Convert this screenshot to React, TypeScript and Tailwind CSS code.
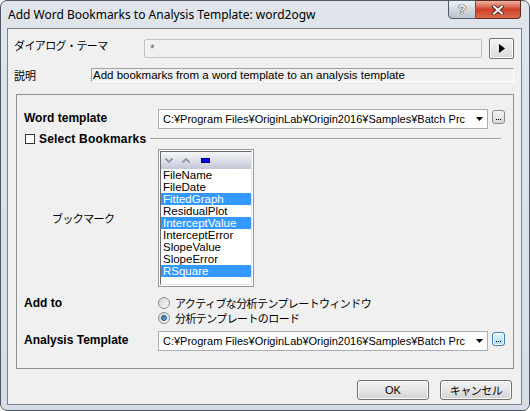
const latin = "font-['Liberation_Sans','Noto_Sans_CJK_JP',sans-serif]"
const jp = "font-['Noto_Sans_CJK_JP',sans-serif]"
const bold = "font-['Liberation_Sans',Arial,sans-serif] text-[12px] font-bold leading-[16px] text-black"

const path = 'C:¥Program Files¥OriginLab¥Origin2016¥Samples¥Batch Prc'

const bookmarks = [
  { name: 'FileName', on: false },
  { name: 'FileDate', on: false },
  { name: 'FittedGraph', on: true },
  { name: 'ResidualPlot', on: false },
  { name: 'InterceptValue', on: true },
  { name: 'InterceptError', on: false },
  { name: 'SlopeValue', on: false },
  { name: 'SlopeError', on: false },
  { name: 'RSquare', on: true },
]

function Combo({ value }: { value: string }) {
  return (
    <div className="flex h-[20px] w-[330px] items-center border border-[#abadb3] bg-white pl-[4px] pr-[4px]">
      <span className={`${latin} flex-1 overflow-hidden whitespace-nowrap text-[11px] leading-[18px] text-black`}>
        {value}
      </span>
      <svg width="7" height="4" viewBox="0 0 7 4" className="ml-[4px]">
        <path d="M0 0h7L3.5 4z" fill="#000" />
      </svg>
    </div>
  )
}

function Browse({ hot }: { hot?: boolean }) {
  return (
    <div
      className={
        hot
          ? 'flex h-[14px] w-[13px] items-end justify-center rounded-[3px] border border-[#3c7fb1] bg-gradient-to-b from-[#e8f6fd] to-[#a6d8f4] pb-[3px] shadow-[inset_0_0_0_1px_#ffffff]'
          : 'flex h-[14px] w-[13px] items-end justify-center rounded-[3px] border border-[#8a8a8a] bg-gradient-to-b from-[#f6f6f6] to-[#d6d6d6] pb-[3px]'
      }
    >
      <svg width="5" height="1" viewBox="0 0 5 1">
        <rect x="0" y="0" width="1" height="1" fill="#000" />
        <rect x="2" y="0" width="1" height="1" fill="#000" />
        <rect x="4" y="0" width="1" height="1" fill="#000" />
      </svg>
    </div>
  )
}

function Radio({ on }: { on?: boolean }) {
  return (
    <span className="flex h-[12px] w-[12px] items-center justify-center rounded-full border border-[#8e8f8f] bg-gradient-to-br from-[#d4d4d4] to-[#fbfbfb]">
      {on && <span className="h-[6px] w-[6px] rounded-full border border-[#1d4f86] bg-gradient-to-br from-[#2a65a3] to-[#7cc4f0]" />}
    </span>
  )
}

function WinButton({ children }: { children: React.ReactNode }) {
  return (
    <div className="flex h-[20px] w-[72px] items-center justify-center rounded-[3px] border border-[#707070] bg-gradient-to-b from-[#f2f2f2] via-[#e6e6e6] to-[#d2d2d2] shadow-[inset_0_0_0_1px_#fbfbfb]">
      {children}
    </div>
  )
}

export default function App() {
  return (
    <div className="h-[411px] w-[530px] bg-white">
      <div className="flex h-[411px] w-[530px] flex-col rounded-[7px] border border-[#4f5864] bg-gradient-to-b from-[#dfe5eb] to-[#d6dde5]">
        {/* title bar */}
        <div className="flex h-[27px] items-start">
          <div className="pl-[7px] pt-[6px] font-['Noto_Sans',sans-serif] text-[12px] leading-[16px] text-black">
            Add Word Bookmarks to Analysis Template: word2ogw
          </div>
          <div className="-mt-[1px] ml-auto mr-[8px] flex">
            <div className="flex h-[19px] w-[28px] items-center justify-center rounded-bl-[4px] border border-[#4f5b68] bg-gradient-to-b from-[#eef1f4] via-[#d3d9df] to-[#bcc4cd]">
              <span className="font-['Liberation_Sans',sans-serif] text-[13px] font-bold leading-none text-white [text-shadow:0_0_1px_#333,0_0_1px_#333,0_0_1px_#333]">
                ?
              </span>
            </div>
            <div className="flex h-[19px] w-[45px] items-center justify-center rounded-br-[4px] border border-l-0 border-[#5a2b22] bg-gradient-to-b from-[#eeb2a2] via-[#cc3f26] to-[#dc6a4c]">
              <svg width="12" height="10" viewBox="0 0 12 10">
                <path d="M2 1.5L10 8.5M10 1.5L2 8.5" stroke="#3a1a14" strokeWidth="3.6" strokeLinecap="square" />
                <path d="M2 1.5L10 8.5M10 1.5L2 8.5" stroke="#ffffff" strokeWidth="2" strokeLinecap="square" />
              </svg>
            </div>
          </div>
        </div>

        {/* client area */}
        <div className="ml-[6px] mr-[7px] flex h-[377px] flex-col border border-[#7a838d] bg-[#f0f0f0]">
          {/* dialog theme */}
          <div className="mt-[9px] flex items-start">
            <div className={`${jp} w-[136px] pl-[6px] text-[11px] leading-[14px] tracking-[-0.6px] text-black`}>
              ダイアログ・テーマ
            </div>
            <div className="mt-[1px] flex h-[19px] w-[338px] items-center rounded-[2px] border border-[#c2c2c2] bg-[#f0f0f0] pl-[5px]">
              <span className={`${latin} text-[12px] leading-[14px] text-[#6d6d6d]`}>*</span>
            </div>
            <div className="ml-[7px] flex h-[21px] w-[25px] items-center justify-center rounded-[2px] border border-[#707070] bg-gradient-to-b from-[#f4f4f4] to-[#dadada] shadow-[inset_0_0_0_1px_#fbfbfb]">
              <svg width="6" height="9" viewBox="0 0 6 9">
                <path d="M0 0L6 4.5L0 9z" fill="#000" />
              </svg>
            </div>
          </div>

          {/* description */}
          <div className="mt-[9px] flex items-center">
            <div className={`${jp} w-[83px] pl-[6px] text-[11px] leading-[14px] text-black`}>説明</div>
            <div className="flex h-[14px] w-[423px] items-center border border-b-white border-l-[#a0a0a0] border-r-white border-t-[#a0a0a0] pl-[1px]">
              <span className={`${latin} whitespace-nowrap text-[11.5px] leading-[12px] text-black`}>
                Add bookmarks from a word template to an analysis template
              </span>
            </div>
          </div>

          {/* group */}
          <div className="ml-[8px] mt-[12px] flex h-[275px] w-[498px] flex-col border border-[#8d9094]">
            <div className="mt-[14px] flex items-start">
              <div className={`${bold} w-[141px] pl-[7px] pt-[1px]`}>Word template</div>
              <Combo value={path} />
              <div className="ml-[4px] mt-[1px]">
                <Browse />
              </div>
            </div>

            <div className="mt-[3px] flex h-[14px] items-center">
              <span className="ml-[8px] h-[10px] w-[10px] border border-[#333333] bg-white" />
              <span className={`${bold} ml-[4px] tracking-[0.2px]`}>Select Bookmarks</span>
              <span className="ml-[4px] mr-[12px] h-[2px] flex-1 border-b border-t border-b-white border-t-[#a0a0a0]" />
            </div>

            <div className="mt-[3px] flex items-center">
              <div className={`${jp} w-[141px] pl-[35px] text-[11px] leading-[14px] tracking-[-0.6px] text-black`}>
                ブックマーク
              </div>
              <div className="h-[138px] w-[96px] border border-[#9a9a9a] bg-white p-[1px]">
                <div className="flex h-full flex-col border border-b-[#e3e3e3] border-l-[#6d6d6d] border-r-[#e3e3e3] border-t-[#6d6d6d]">
                  <div className="flex h-[17px] items-center bg-gradient-to-b from-[#f6f7fa] to-[#c4c8d7] pl-[4px]">
                    <svg width="8" height="5" viewBox="0 0 8 5">
                      <path d="M0.5 0.5L4 4L7.5 0.5" stroke="#8b909d" strokeWidth="1.6" fill="none" />
                    </svg>
                    <svg width="8" height="5" viewBox="0 0 8 5" className="ml-[9px]">
                      <path d="M0.5 4.5L4 1L7.5 4.5" stroke="#8b909d" strokeWidth="1.6" fill="none" />
                    </svg>
                    <span className="ml-[11px] h-[5px] w-[9px] border border-[#000060] bg-[#0000ff]" />
                  </div>
                  {bookmarks.map((b) => (
                    <div
                      key={b.name}
                      className={`${latin} h-[12px] whitespace-nowrap pl-[2px] text-[11.5px] leading-[12px] ${
                        b.on ? 'bg-[#3399ff] text-white' : 'text-black'
                      }`}
                    >
                      {b.name}
                    </div>
                  ))}
                </div>
              </div>
            </div>

            <div className="mt-[9px] flex h-[14px] items-center">
              <div className={`${bold} w-[141px] pl-[7px]`}>Add to</div>
              <Radio />
              <span className={`${jp} ml-[5px] text-[11px] leading-[14px] tracking-[-0.6px] text-black`}>
                アクティブな分析テンプレートウィンドウ
              </span>
            </div>
            <div className="mt-[1px] flex h-[14px] items-center">
              <div className="w-[141px]" />
              <Radio on />
              <span className={`${jp} ml-[5px] text-[11px] leading-[14px] tracking-[-0.6px] text-black`}>
                分析テンプレートのロード
              </span>
            </div>

            <div className="mt-[6px] flex items-start">
              <div className={`${bold} w-[141px] pl-[7px] pt-[1px]`}>Analysis Template</div>
              <Combo value={path} />
              <div className="ml-[4px] mt-[1px]">
                <Browse hot />
              </div>
            </div>
          </div>

          {/* buttons */}
          <div className="mt-[11px] flex justify-end gap-[11px] pr-[9px]">
            <WinButton>
              <span className={`${latin} text-[11px] leading-[14px] text-black`}>OK</span>
            </WinButton>
            <WinButton>
              <span className={`${jp} text-[11px] leading-[14px] tracking-[-0.5px] text-black`}>キャンセル</span>
            </WinButton>
          </div>
        </div>
      </div>
    </div>
  )
}
